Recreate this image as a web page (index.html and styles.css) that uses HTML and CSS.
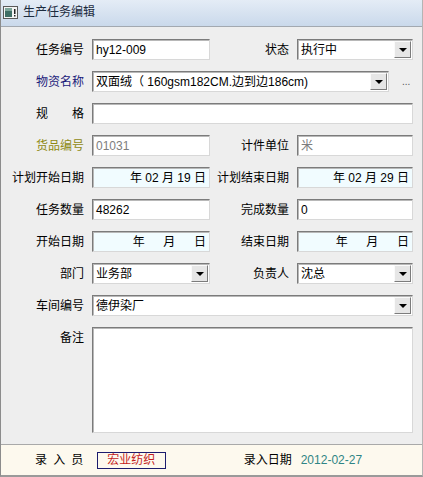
FILE: index.html
```html
<!DOCTYPE html>
<html lang="zh-CN">
<head>
    <meta charset="UTF-8">
    <meta name="viewport" content="width=device-width, initial-scale=1.0">
    <title>生产任务编辑</title>
    <link rel="stylesheet" href="styles.css">
</head>
<body>
    <div class="window">
        <div class="titlebar">
            <svg class="app-icon" width="15" height="13" viewBox="0 0 15 13">
                <rect x="0.5" y="0.5" width="14" height="12" fill="#f4f4f4" stroke="#5a5a5a"/>
                <rect x="2" y="2" width="7" height="9" fill="#3f6f66"/>
                <rect x="2" y="2" width="7" height="3" fill="#7fa79c"/>
                <rect x="11" y="3" width="1.5" height="5" fill="#222"/>
                <rect x="11" y="9" width="1.5" height="1.5" fill="#222"/>
            </svg>
            <span class="title">生产任务编辑</span>
        </div>

        <div class="form">
            <div class="row">
                <label class="lbl">任务编号</label>
                <div class="field">hy12-009</div>
                <label class="lbl">状态</label>
                <div class="field combo">执行中<span class="drop"></span></div>
            </div>

            <div class="row">
                <label class="lbl lbl-navy">物资名称</label>
                <div class="span-3 with-more">
                    <div class="field combo">双面绒（ 160gsm182CM.边到边186cm)<span class="drop"></span></div>
                    <span class="more">...</span>
                </div>
            </div>

            <div class="row">
                <label class="lbl">规　　格</label>
                <div class="field span-3"></div>
            </div>

            <div class="row">
                <label class="lbl lbl-olive">货品编号</label>
                <div class="field readonly">01031</div>
                <label class="lbl">计件单位</label>
                <div class="field readonly">米</div>
            </div>

            <div class="row">
                <label class="lbl">计划开始日期</label>
                <div class="field date">年 02 月 19 日</div>
                <label class="lbl">计划结束日期</label>
                <div class="field date">年 02 月 29 日</div>
            </div>

            <div class="row">
                <label class="lbl">任务数量</label>
                <div class="field">48262</div>
                <label class="lbl">完成数量</label>
                <div class="field">0</div>
            </div>

            <div class="row">
                <label class="lbl">开始日期</label>
                <div class="field date">年　  月　  日</div>
                <label class="lbl">结束日期</label>
                <div class="field date">年　  月　  日</div>
            </div>

            <div class="row">
                <label class="lbl">部门</label>
                <div class="field combo">业务部<span class="drop"></span></div>
                <label class="lbl">负责人</label>
                <div class="field combo">沈总<span class="drop"></span></div>
            </div>

            <div class="row">
                <label class="lbl">车间编号</label>
                <div class="field combo span-3">德伊染厂<span class="drop"></span></div>
            </div>

            <div class="row row-memo">
                <label class="lbl">备注</label>
                <div class="field memo span-3"></div>
            </div>
        </div>

        <div class="footer">
            <span class="foot-lbl foot-user-lbl">录 入 员</span>
            <span class="operator">宏业纺织</span>
            <span class="foot-lbl foot-date-lbl">录入日期</span>
            <span class="foot-date">2012-02-27</span>
        </div>
    </div>
</body>
</html>
```

FILE: styles.css
```css
* {
    margin: 0;
    padding: 0;
    box-sizing: border-box;
}

body {
    font-family: "Liberation Sans", "Noto Sans CJK SC", sans-serif;
    font-size: 12px;
    line-height: 14px;
    color: #000;
    background: #fff;
}

.window {
    width: 423px;
    height: 477px;
    background: #eeeeee;
    border-left: 1px solid #8c8c8c;
    border-right: 1px solid #b4b4b4;
    border-bottom: 2px solid #9a9a9a;
    display: flex;
    flex-direction: column;
}

/* title bar */
.titlebar {
    height: 27px;
    display: flex;
    align-items: center;
    gap: 5px;
    padding: 0 0 2px 2px;
    background: linear-gradient(#e4ecf6, #cad9eb);
    border-bottom: 1px solid #a3a9b0;
}

.title {
    font-size: 12px;
    color: #1c2b3d;
}

/* form rows */
.form {
    flex: 1;
    display: flex;
    flex-direction: column;
    gap: 11px;
    padding-top: 12px;
}

.row {
    display: grid;
    grid-template-columns: 91px 118px 87px 116px;
    align-items: center;
    height: 21px;
}

.lbl {
    text-align: right;
    padding-right: 8px;
    white-space: nowrap;
}

.lbl-navy {
    color: #1a1a7a;
}

.lbl-olive {
    color: #8f8a14;
}

.field {
    height: 21px;
    background: #fff;
    border: 1px solid;
    border-color: #7b7b7b #d8d8d8 #d8d8d8 #7b7b7b;
    box-shadow: inset 1px 1px 0 #b8b8b8;
    padding: 3px 2px 0 3px;
    white-space: nowrap;
    overflow: hidden;
    position: relative;
}

.span-3 {
    grid-column: 2 / 5;
}

.readonly {
    color: #7d7d7d;
}

.date {
    background: #f1fcff;
    text-align: right;
    white-space: pre;
    padding-right: 3px;
}

/* drop-down combos */
.combo {
    padding-right: 20px;
}

.drop {
    position: absolute;
    top: 1px;
    right: 1px;
    width: 17px;
    height: 17px;
    background: #e6e6e6;
    border: 1px solid;
    border-color: #fafafa #7c7c7c #7c7c7c #fafafa;
}

.drop::after {
    content: "";
    position: absolute;
    left: 4px;
    top: 6px;
    border-left: 4px solid transparent;
    border-right: 4px solid transparent;
    border-top: 4px solid #000;
}

.with-more {
    display: flex;
    align-items: center;
}

.with-more .field {
    width: 297px;
}

.more {
    margin-left: 13px;
    font-size: 10px;
    color: #555;
}

.row-memo {
    height: 106px;
    align-items: start;
}

.row-memo .lbl {
    padding-top: 4px;
}

.memo {
    height: 106px;
}

/* footer strip */
.footer {
    height: 31px;
    margin-top: 8px;
    background: #fdf9ee;
    border-top: 1px solid #a9a9a9;
    display: flex;
    align-items: center;
}

.foot-user-lbl {
    margin-left: 34px;
    letter-spacing: 1.4px;
}

.operator {
    margin-left: 12px;
    width: 69px;
    height: 17px;
    border: 1px solid #1c1c6e;
    color: #c41e1e;
    text-align: center;
    line-height: 15px;
}

.foot-date-lbl {
    margin-left: 78px;
}

.foot-date {
    margin-left: 9px;
    color: #2f8585;
}
```
